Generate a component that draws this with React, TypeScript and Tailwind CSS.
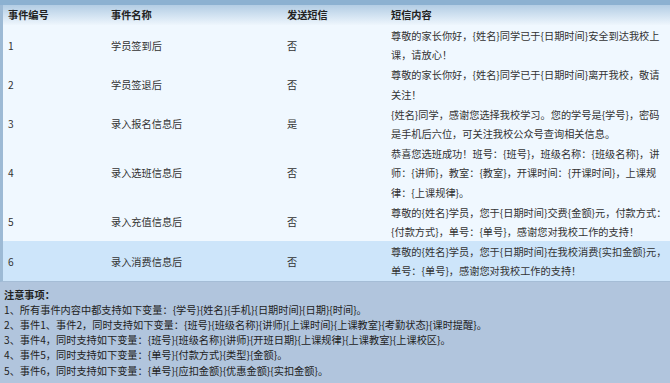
import React from "react";

type Row = { id: number; name: string; sms: string; lines: string[]; active?: boolean };

const rows: Row[] = [
  { id: 1, name: "学员签到后", sms: "否", lines: ["尊敬的家长你好，{姓名}同学已于{日期时间}安全到达我校上", "课，请放心！"] },
  { id: 2, name: "学员签退后", sms: "否", lines: ["尊敬的家长你好，{姓名}同学已于{日期时间}离开我校，敬请", "关注！"] },
  { id: 3, name: "录入报名信息后", sms: "是", lines: ["{姓名}同学，感谢您选择我校学习。您的学号是{学号}，密码", "是手机后六位，可关注我校公众号查询相关信息。"] },
  {
    id: 4,
    name: "录入选班信息后",
    sms: "否",
    lines: [
      "恭喜您选班成功！班号：{班号}，班级名称：{班级名称}，讲",
      "师：{讲师}，教室：{教室}，开课时间：{开课时间}，上课规",
      "律：{上课规律}。",
    ],
  },
  { id: 5, name: "录入充值信息后", sms: "否", lines: ["尊敬的{姓名}学员，您于{日期时间}交费{金额}元，付款方式：", "{付款方式}，单号：{单号}，感谢您对我校工作的支持！"] },
  {
    id: 6,
    name: "录入消费信息后",
    sms: "否",
    active: true,
    lines: ["尊敬的{姓名}学员，您于{日期时间}在我校消费{实扣金额}元，", "单号：{单号}，感谢您对我校工作的支持！"],
  },
];

const notes = [
  "1、所有事件内容中都支持如下变量：{学号}{姓名}{手机}{日期时间}{日期}{时间}。",
  "2、事件1、事件2，同时支持如下变量：{班号}{班级名称}{讲师}{上课时间}{上课教室}{考勤状态}{课时提醒}。",
  "3、事件4，同时支持如下变量：{班号}{班级名称}{讲师}{开班日期}{上课规律}{上课教室}{上课校区}。",
  "4、事件5，同时支持如下变量：{单号}{付款方式}{类型}{金额}。",
  "5、事件6，同时支持如下变量：{单号}{应扣金额}{优惠金额}{实扣金额}。",
];

const font = { fontFamily: '"Noto Sans CJK SC", "Noto Sans", sans-serif' };

export default function App() {
  return (
    <div className="w-[670px] h-[383px] bg-[#b1c5dd] overflow-hidden text-[10.2px]" style={font}>
      <div className="h-[5px] bg-[#8cb1d1]" />
      <div className="border-l-[3px] border-[#9dbad5] border-b border-b-[#a5bdd6]">
        {/* Header */}
        <div className="flex h-[20px] items-center bg-gradient-to-b from-[#b3cde4] to-[#eef6fd] font-bold text-[#222]">
          <div className="w-[108px] pl-[5px]">事件编号</div>
          <div className="w-[176px]">事件名称</div>
          <div className="w-[104px]">发送短信</div>
          <div className="flex-1">短信内容</div>
        </div>

        {rows.map(r => (
          <div
            key={r.id}
            className={`flex items-center pt-px text-[#333] ${r.active ? "bg-[#cde5fa]" : "bg-[#f0f8ff]"}`}
          >
            <div className="w-[108px] pl-[5px]">{r.id}</div>
            <div className="w-[176px]">{r.name}</div>
            <div className="w-[104px]">{r.sms}</div>
            <div className="flex-1 leading-[19.2px]">
              {r.lines.map((l, i) => (
                <div key={i} className="whitespace-nowrap">{l}</div>
              ))}
            </div>
          </div>
        ))}
      </div>

      {/* Notes */}
      <div className="px-[4px] pt-[5px] leading-[15.2px] text-[#222]">
        <div className="font-bold">注意事项：</div>
        {notes.map((n, i) => (
          <div key={i} className="whitespace-nowrap">{n}</div>
        ))}
      </div>
    </div>
  );
}
